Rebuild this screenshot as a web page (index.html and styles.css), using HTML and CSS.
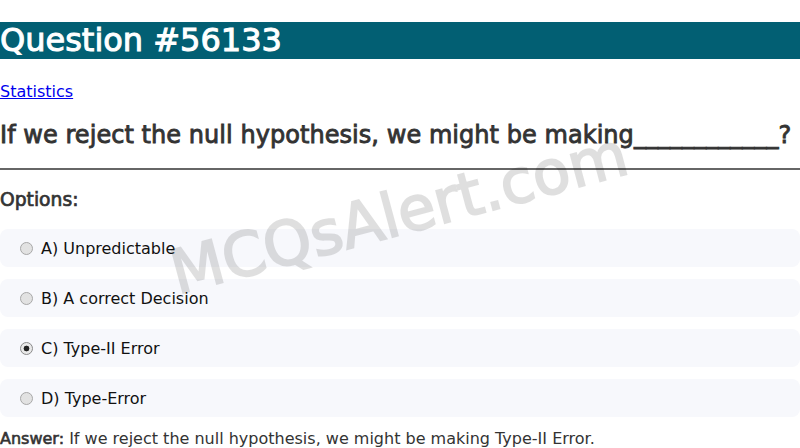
FILE: index.html
```html
<!DOCTYPE html>
<html>
<head>
<meta charset="utf-8">
<link rel="stylesheet" href="styles.css">
</head>
<body>
<div class="page">
  <h1 class="title">Question #56133</h1>
  <a class="cat" href="#">Statistics</a>
  <h2 class="question">If we reject the null hypothesis, we might be making____________?</h2>
  <hr class="rule">
  <h3 class="opts-label">Options:</h3>
  <div class="options">
    <label class="option"><input class="radio" type="radio" name="o"> A) Unpredictable</label>
    <label class="option"><input class="radio" type="radio" name="o"> B) A correct Decision</label>
    <label class="option"><input class="radio" type="radio" name="o" checked> C) Type-II Error</label>
    <label class="option"><input class="radio" type="radio" name="o"> D) Type-Error</label>
  </div>
  <p class="answer"><b class="answer-key">Answer:</b> If we reject the null hypothesis, we might be making Type-II Error.</p>
  <div class="watermark">MCQsAlert.com</div>
</div>
</body>
</html>
```

FILE: styles.css
```css
html, body {
  margin: 0;
  padding: 0;
  background: #fff;
  font-family: "DejaVu Sans", sans-serif;
}
.page {
  position: relative;
  overflow: hidden;
  height: 448px;
}
.title {
  margin: 22px 0 23px;
  background: #025f73;
  color: #fff;
  font-size: 32px;
  font-weight: normal;
  -webkit-text-stroke: 1px #fff;
  line-height: 37px;
}
.cat {
  display: block;
  width: max-content;
  color: #0000ee;
  font-size: 16px;
  line-height: 19px;
}
.question {
  margin: 20px 0 19px;
  color: #333;
  font-weight: normal;
  -webkit-text-stroke: 0.85px #333;
  font-size: 24px;
  line-height: 28px;
  letter-spacing: 0.05px;
}
.rule {
  margin: 0;
  border: 0;
  border-top: 2px solid #666;
  height: 0;
}
.opts-label {
  margin: 19px 0 18px;
  color: #333;
  font-weight: normal;
  -webkit-text-stroke: 0.7px #333;
  font-size: 18.72px;
  line-height: 22px;
}
.options {
  display: flex;
  flex-direction: column;
  gap: 12px;
}
.option {
  display: flex;
  align-items: center;
  height: 38px;
  padding: 0 15px;
  background: #f7f8fc;
  border-radius: 8px;
  color: #111;
  font-size: 16px;
}
.radio {
  -webkit-appearance: none;
  appearance: none;
  box-sizing: border-box;
  margin: 0 8px 0 5px;
  width: 13px;
  height: 13px;
  border-radius: 50%;
  border: 1px solid #a8a8a8;
  background: #e2e2e2;
}
.radio:checked {
  border-color: #8a8a8a;
  background: radial-gradient(circle, #222 0, #222 2.6px, #e9e9e9 3.2px, #e9e9e9 100%);
}
.answer {
  margin: 12px 0 0;
  color: #333;
  font-size: 16px;
  line-height: 19px;
}
.answer-key {
  font-weight: normal;
  -webkit-text-stroke: 0.6px #333;
}
.watermark {
  position: absolute;
  left: 399px;
  top: 213px;
  transform: translate(-50%, -50%) rotate(-15deg);
  font-size: 61px;
  line-height: normal;
  font-weight: normal;
  color: #000;
  -webkit-text-stroke: 1.9px #000;
  opacity: 0.12;
  white-space: nowrap;
  pointer-events: none;
}
```
